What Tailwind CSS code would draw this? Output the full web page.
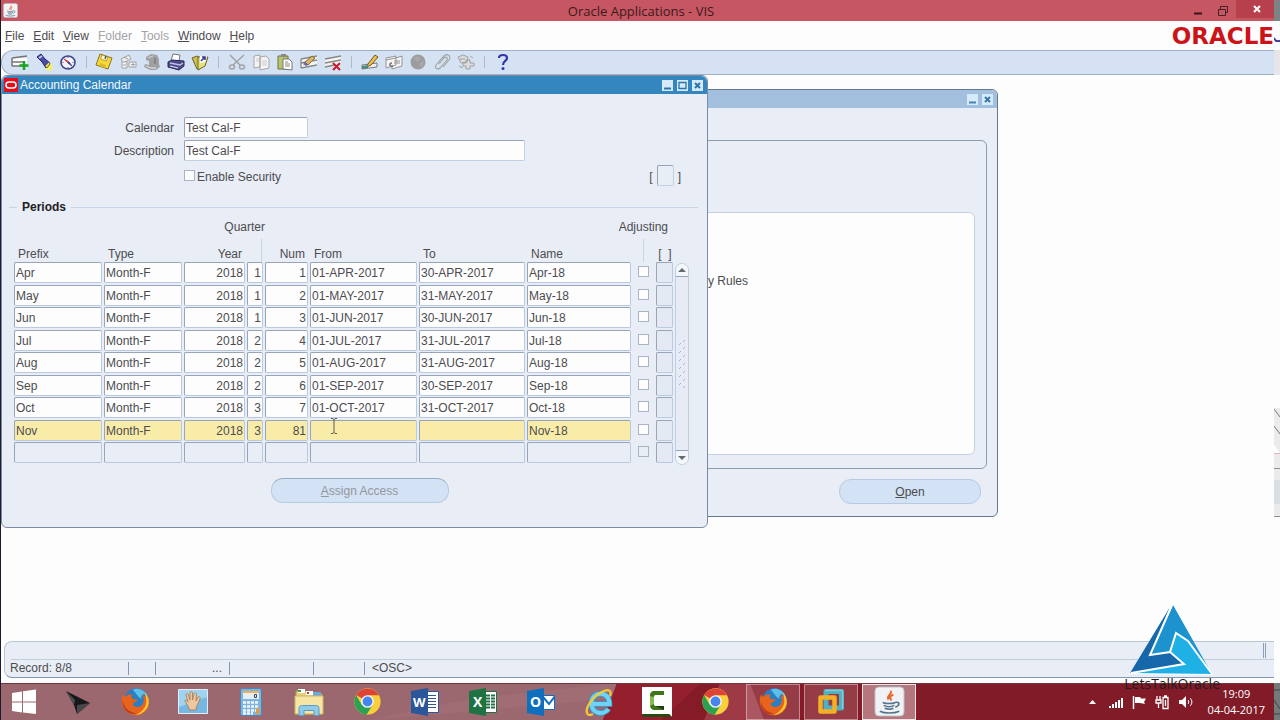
<!DOCTYPE html>
<html lang="en">
<head>
  <meta charset="UTF-8" />
  <meta name="viewport" content="width=device-width, initial-scale=1.0" />
  <title>Oracle Applications - VIS</title>
  <script src="https://cdn.jsdelivr.net/npm/@tailwindcss/browser@4"></script>
</head>
<body class="h-screen overflow-hidden bg-[#fdfdfd] font-['Liberation_Sans',sans-serif] text-xs text-[#4c4c50]">

  <!-- Shared icons -->
  <svg class="hidden">
    <symbol id="java" viewBox="0 0 32 32">
      <rect x="1" y="1" width="30" height="30" rx="4" fill="#f1f2f4" stroke="#b9bcc4" />
      <path d="M17 5c3 3-5 5-2 9M20 9c-4 2-4 3-2 6" fill="none" stroke="#e8642c" stroke-width="2" />
      <path d="M9 17c3 1.500 10 1.500 13 0M10 20c3 1.500 8 1.500 11 0M11 23c3 1 7 1 9 0M22 17c5-1 5 3 0 5M6 26c5 2.500 15 2.500 20 0" fill="none" stroke="#54738f" stroke-width="1.600" />
    </symbol>
    <symbol id="firefox" viewBox="0 0 32 32">
      <circle cx="17" cy="15" r="13.500" fill="#2a7fc4" />
      <path d="M13 3c5-3 13 0 16 6-5-3-8 1-6 4-4-1-6-6-10-10z" fill="#5cc0ea" />
      <path d="M3 8c0 3 1 3 3 2 2-2 5-2 7-1-2 1-2 3 0 4 2 1 4 0 5 1-1 3-5 3-5 5 1 4 8 4 11 0 2-4 1-8-1-11 6 3 9 9 7 14-3 8-12 11-19 8C3 27 0 19 1 13c0-2 1-4 2-5z" fill="#e8641c" />
      <path d="M26 6c5 4 6 11 3 17-3 5-8 8-13 8 7-3 12-9 12-15 0-4-1-7-2-10z" fill="#fbc52e" />
      <path d="M2 15c1 8 7 13 15 14C9 32 1 25 2 15z" fill="#c13a18" />
    </symbol>
    <symbol id="chrome" viewBox="0 0 32 32">
      <circle cx="16" cy="16" r="14.500" fill="#fbcf3b" />
      <path d="M16 16 3.400 8.800A14.500 14.500 0 0 1 28.600 9H16z" fill="#dd4437" />
      <path d="M3.400 8.800A14.500 14.500 0 0 0 15 30.500L21.500 20 16 16 10 20z" fill="#2aa153" />
      <circle cx="16" cy="16" r="7" fill="#f6f6f6" />
      <circle cx="16" cy="16" r="5.400" fill="#4684ee" />
    </symbol>
  </svg>

  <div class="relative flex h-full flex-col">

    <!-- Title bar -->
    <header class="flex h-[21px] shrink-0 items-center bg-[#c65662] pl-[3px] pr-[6px]">
      <svg class="size-[15px]"><use href="#java" /></svg>
      <h1 class="flex-1 pl-[78px] text-center font-['Open_Sans',sans-serif] text-[13px] leading-5 text-[#3c1a20]">Oracle Applications - VIS</h1>
      <button aria-label="Minimize" class="flex h-full w-6 items-center justify-center"><svg class="size-3" viewBox="0 0 12 12"><path d="M2 8.500h8" stroke="#35151a" stroke-width="2" /></svg></button>
      <button aria-label="Restore" class="flex h-full w-[26px] items-center justify-center"><svg class="size-3" viewBox="0 0 12 12" fill="none" stroke="#4a2027"><path d="M1.500 4.500h7v6h-7zM3.500 4V1.500h7v6H9" /></svg></button>
      <button aria-label="Close" class="flex h-[18px] w-[38px] items-center justify-center self-start bg-[#b83f4c] pl-1"><svg class="size-[10px]" viewBox="0 0 10 10"><path d="M2 2l6 6M8 2L2 8" stroke="#fff" stroke-width="2" /></svg></button>
    </header>

    <!-- Menu bar -->
    <nav class="flex h-[29px] shrink-0 items-center gap-[9px] pl-[5px] pr-[6px] pt-px text-[12px]">
      <a href="#"><u>F</u>ile</a>
      <a href="#"><u>E</u>dit</a>
      <a href="#"><u>V</u>iew</a>
      <a href="#" class="text-[#a3a3a8]"><u>F</u>older</a>
      <a href="#" class="text-[#a3a3a8]"><u>T</u>ools</a>
      <a href="#"><u>W</u>indow</a>
      <a href="#"><u>H</u>elp</a>
      <span class="ml-auto font-['DejaVu_Sans',sans-serif] text-[23px] leading-7 font-bold text-[#cb1419]">ORACLE</span>
    </nav>

    <!-- Toolbar -->
    <div class="ml-px mr-[6px] flex h-[25px] shrink-0 items-center rounded-l-xl border-y border-l border-[#9fb0c6] bg-[#d4e2f3] pb-[2px] pl-[6px]">
      <button aria-label="New" class="flex w-6 justify-center"><svg class="size-[18px]" viewBox="0 0 18 18"><path d="M1 5h15v8H1z" fill="#fafafa" /><path d="M1 5l15-2M1 9h12M1 13h9M1 5v8" stroke="#777" stroke-width="1.500" /><path d="M13 8v9M8.500 12.500h9" stroke="#17a31f" stroke-width="2.500" /></svg></button>
      <button aria-label="Find" class="flex w-6 justify-center"><svg class="size-[18px]" viewBox="0 0 18 18"><circle cx="14" cy="14" r="3.500" fill="#f8ee6a" /><path d="M2 4l4-3 4 5 5 4-4 5-4-6z" fill="#4a4aa8" stroke="#26266c" /><path d="M4 5l3-2" stroke="#c9c9f0" stroke-width="2" /><path d="M10 13l4-4 1 2-3 4z" fill="#e9dc58" stroke="#6b6a50" /></svg></button>
      <button aria-label="Show Navigator" class="flex w-6 justify-center"><svg class="size-[18px]" viewBox="0 0 18 18"><ellipse cx="9" cy="9.500" rx="7" ry="6.500" fill="#f3f3fb" stroke="#44448a" stroke-width="1.600" /><path d="M5 6l5 3-1 1z" fill="#d23c3c" stroke="#d23c3c" /><path d="M13 13L9 10l1-1z" fill="#44448a" stroke="#44448a" /><path d="M9 4v1M9 14v1M3.500 9.500h1M13.500 9.500h1" stroke="#555" /></svg></button>
      <span class="flex w-3 justify-center"><i class="h-3 w-px bg-[#b4bac4]"></i></span>
      <button aria-label="Save" class="flex w-6 justify-center"><svg class="size-[18px]" viewBox="0 0 18 18"><path d="M5 1l12 4-4 11L1 12z" fill="#f6d83a" stroke="#8d741b" /><path d="M7 2l6 2-1.500 4-6-2z" fill="#fff8d0" stroke="#ab8f28" stroke-width=".8" /><path d="M11 3l-1 3" stroke="#555" stroke-width="1.500" /><path d="M5 10l6 2-1 3-6-2z" fill="#e0b92a" /></svg></button>
      <button aria-label="Next Step" class="flex w-6 justify-center"><svg class="size-[18px]" viewBox="0 0 18 18" fill="#ececec" stroke="#a2a2a2"><path d="M2 6l8-4 2 4-8 4z" /><path d="M3 9h5v6H3zM10 9h7v5h-7z" fill="#f4f4f4" /><path d="M5 4l4 2M12 11.500h4M14 9.500v4M4 12h3" /></svg></button>
      <button aria-label="Switch Responsibility" class="flex w-6 justify-center"><svg class="size-[18px]" viewBox="0 0 18 18"><path d="M3 4l5-3 6 1 2 4v5l1 3-4 3H7l-6-3 1-3 4 1V8L3 7z" fill="#a0a0a2" /><path d="M5 5l5-2M3 13l5 2h5" stroke="#d4d4d4" stroke-width="1.300" fill="none" /><path d="M12 5v6" stroke="#858588" stroke-width="2" /></svg></button>
      <button aria-label="Print" class="flex w-6 justify-center"><svg class="size-[18px]" viewBox="0 0 18 18"><path d="M6 1l7 1-1 6H4z" fill="#fff" stroke="#777" /><path d="M1 9l4-2 12 1v5l-5 4-11-3z" fill="#4b4b8c" stroke="#2a2a55" /><path d="M3 10l10 2 3-2" stroke="#c0c0e4" stroke-width="1.500" fill="none" /><path d="M3 13l8 2" stroke="#e8e8f8" /></svg></button>
      <button aria-label="Close Form" class="flex w-6 justify-center"><svg class="size-[18px]" viewBox="0 0 18 18"><path d="M1 5l5-2 3 2v11H6z" fill="#c9be52" stroke="#6f6624" /><path d="M7 4h10l-3 9-7 4z" fill="#e6df7e" stroke="#6f6624" /><path d="M9 3h7l-2 6-5 1z" fill="#fff" /><path d="M10 8l4-4M11 4h3v3" stroke="#3538a0" stroke-width="1.600" fill="none" /></svg></button>
      <span class="flex w-[13px] justify-center"><i class="h-3 w-px bg-[#b4bac4]"></i></span>
      <button aria-label="Cut" class="flex w-6 justify-center"><svg class="size-[18px]" viewBox="0 0 18 18" fill="none" stroke="#a2a2a6" stroke-width="1.500"><path d="M2 2l10 10M16 2L5 12" /><ellipse cx="4" cy="14" rx="2.500" ry="2" /><ellipse cx="14" cy="14" rx="2.500" ry="2" /></svg></button>
      <button aria-label="Copy" class="flex w-6 justify-center"><svg class="size-[18px]" viewBox="0 0 18 18" fill="#f4f4f4" stroke="#a6a6a6"><path d="M2 3l6-1v12l-6 1zM8 4l6-1 3 3v9l-9 2z" /><path d="M10 8h5M10 10h5M10 12h5M4 6h3M4 8h3" stroke="#ccc" /></svg></button>
      <button aria-label="Paste" class="flex w-6 justify-center"><svg class="size-[18px]" viewBox="0 0 18 18"><path d="M2 3h10v13H2z" fill="#b8c46a" stroke="#6e7240" /><path d="M5 1h5v3H5z" fill="#888" /><path d="M7 6h6l3 3v8l-9-1z" fill="#fff" stroke="#777" /><path d="M9 9h3M9 11h5M9 13h5" stroke="#888" /></svg></button>
      <button aria-label="Clear Record" class="flex w-6 justify-center"><svg class="size-[18px]" viewBox="0 0 18 18"><path d="M1 6l16-3v9L1 15z" fill="#f4f4f4" /><path d="M1 6l16-3M1 10l16-3M1 15l16-3M1 6v9" stroke="#888" stroke-width="1.300" /><path d="M5 9l7-6 3 2-7 7z" fill="#d8b46a" stroke="#8b6b38" /><path d="M5 9l3 3-2 1-3-2z" fill="#6868b4" /></svg></button>
      <button aria-label="Delete Record" class="flex w-6 justify-center"><svg class="size-[18px]" viewBox="0 0 18 18"><path d="M1 6l16-3v8L1 14z" fill="#f4f4f4" /><path d="M1 6l16-3M1 10l16-3M1 14l9-2" stroke="#888" stroke-width="1.600" /><path d="M9 10l7 7M16 10l-7 7" stroke="#d0162a" stroke-width="2" /></svg></button>
      <span class="flex w-[13px] justify-center"><i class="h-3 w-px bg-[#b4bac4]"></i></span>
      <button aria-label="Edit Field" class="flex w-6 justify-center"><svg class="size-[18px]" viewBox="0 0 18 18"><path d="M1 12l15-2v4L1 16z" fill="#f0f0f0" stroke="#777" /><path d="M7 11l7-9 3 2-7 8-4 2z" fill="#f0c43e" stroke="#6d5330" /><path d="M1 13l6-1v3l-6 1z" fill="#4f8a83" /></svg></button>
      <button aria-label="Zoom" class="flex w-6 justify-center"><svg class="size-[18px]" viewBox="0 0 18 18" fill="#f4f4f4" stroke="#949494"><path d="M1 5l10-2v9l-10 3zM11 5l6-2v10l-10 3v-3" /><path d="M1 7l10-2M9 8h6M9 10h6" /><path d="M8 13c-4 1-4-3-1-3" fill="none" stroke="#777" stroke-width="1.500" /></svg></button>
      <button aria-label="Translations" class="flex w-6 justify-center"><svg class="size-[18px]" viewBox="0 0 18 18"><circle cx="9" cy="9" r="7.500" fill="#9d9da0" /><path d="M4 5l5-2 3 3-4 3zM11 10l4-2-1 5-3 1z" fill="#a8a8aa" /></svg></button>
      <button aria-label="Attachments" class="flex w-6 justify-center"><svg class="size-[18px]" viewBox="0 0 18 18" fill="none" stroke="#a0a0a0" stroke-width="1.100"><path d="M6 11l5-6c2-2 4 0 3 2l-7 8c-2 2-6 0-4-3l8-9c3-3 8 0 5 4l-6 7" /></svg></button>
      <button aria-label="Folder Tools" class="flex w-6 justify-center"><svg class="size-[18px]" viewBox="0 0 18 18" fill="#dcdcdc" stroke="#a0a0a0"><path d="M1 4l5-2 5 2-1 5-6 1zM9 7h4v3h4v3h-4v3H9v-3H6v-3h3z" /><path d="M3 6h5M2 13l4 2M13 3l3 2" /></svg></button>
      <span class="flex w-[13px] justify-center"><i class="h-3 w-px bg-[#b4bac4]"></i></span>
      <button aria-label="Help" class="flex w-6 justify-center"><svg class="size-[18px]" viewBox="0 0 18 18"><path d="M5 5c0-4 8-4 8 0 0 3-4 3-4 7" fill="none" stroke="#3434ac" stroke-width="2.200" /><circle cx="9" cy="15.500" r="1.500" fill="#3434ac" /></svg></button>
    </div>

    <!-- Desktop holding the form windows -->
    <main class="relative flex-1">

      <!-- Navigator window, partly covered -->
      <section class="absolute left-[690px] top-[14px] flex h-[428px] w-[308px] flex-col rounded-md border border-[#66788f] bg-[#e9edf5]">
        <div class="flex h-[18px] items-center justify-end gap-1 rounded-t-md bg-[#a2c0dd] pr-1">
          <button aria-label="Minimize window" class="size-[11px] bg-[#d5ebf9]"><svg viewBox="0 0 11 11"><path d="M2 8.500h7" stroke="#4583b4" stroke-width="2" /></svg></button>
          <button aria-label="Close window" class="size-[11px] bg-[#d5ebf9]"><svg viewBox="0 0 11 11"><path d="M3 3l5 5M8 3L3 8" stroke="#3a76a8" stroke-width="2" /></svg></button>
        </div>
        <div class="mr-[10px] mt-8 flex h-[329px] flex-col rounded-md border border-[#8a9bb2] pb-[13px] pr-[11px] pt-[71px]">
          <div class="flex-1 rounded-md border border-[#c5d0e2] bg-[#fdfdfd] pl-[15px] pt-[60px] leading-4">y Rules</div>
        </div>
        <button class="mr-4 mt-[10px] h-[25px] w-[142px] self-end rounded-xl border border-[#b6cbe3] bg-[#d3e2f4]"><u>O</u>pen</button>
      </section>

      <!-- Accounting Calendar window -->
      <section class="absolute left-px top-0 flex h-[453px] w-[707px] flex-col rounded-md border border-[#7b8ca3] bg-[#e9edf5]">
        <div class="flex h-[18px] items-center gap-1 rounded-t-md bg-[#3386be] pl-[2px] pr-1">
          <svg class="h-[14px] w-[14px]" viewBox="0 0 14 14"><path fill="#e3101c" d="M0 0h14v14H0z" /><rect x="2" y="4" width="10" height="6" rx="3" fill="none" stroke="#fff" stroke-width="1.500" /></svg>
          <h2 class="flex-1 -ml-[2px] leading-4 text-[#f3f8fc]">Accounting Calendar</h2>
          <button aria-label="Minimize calendar" class="size-[11px] bg-[#d5ebf9]"><svg viewBox="0 0 11 11"><path d="M2 8.500h7" stroke="#2c75ab" stroke-width="2" /></svg></button>
          <button aria-label="Maximize calendar" class="size-[11px] bg-[#d5ebf9]"><svg viewBox="0 0 11 11"><path d="M2 2.500h7v6H2z" fill="none" stroke="#2c75ab" stroke-width="1.300" /></svg></button>
          <button aria-label="Close calendar" class="size-[11px] bg-[#d5ebf9]"><svg viewBox="0 0 11 11"><path d="M3 3l5 5M8 3L3 8" stroke="#2c75ab" stroke-width="2" /></svg></button>
        </div>

        <form class="flex flex-col gap-[2px] px-3 pt-[23px]">
          <div class="flex items-center gap-[10px]">
            <label for="calendar" class="w-[160px] pt-px text-right">Calendar</label>
            <input id="calendar" type="text" value="Test Cal-F" class="h-[21px] w-[124px] rounded-xs border border-[#c3d0e3] border-l-[#98a4b8] border-t-[#98a4b8] bg-[#fdfdfd] px-px" />
          </div>
          <div class="flex items-center gap-[10px]">
            <label for="description" class="w-[160px] pt-px text-right">Description</label>
            <input id="description" type="text" value="Test Cal-F" class="h-[21px] w-[341px] rounded-xs border border-[#c3d0e3] border-l-[#98a4b8] border-t-[#98a4b8] bg-[#fdfdfd] px-px" />
          </div>
          <div class="flex h-6 items-center pl-[170px] pr-[14px]">
            <input id="security" type="checkbox" class="size-[11px] appearance-none border border-[#a9b5c6] bg-[#fdfdfd]" />
            <label for="security" class="pl-[2px] pt-[3px]">Enable Security</label>
            <span class="ml-auto pt-1">[</span>
            <input aria-label="Calendar flexfield" type="text" class="mx-1 h-[21px] w-[17px] rounded-xs border border-[#c3d0e3] border-l-[#98a4b8] border-t-[#98a4b8]" />
            <span class="pt-1">]</span>
          </div>
        </form>

        <div class="mt-3 flex h-4 items-center gap-[5px] pl-[7px] pr-[9px]">
          <i class="h-px w-2 bg-[#c8d4e4]"></i>
          <h3 class="font-bold text-[#222]">Periods</h3>
          <i class="h-px flex-1 bg-[#c8d4e4]"></i>
        </div>

        <!-- Period grid -->
        <div class="flex gap-px pl-3">
          <table class="w-[660px] table-fixed border-collapse">
            <colgroup>
              <col class="w-[90px]" /><col class="w-[80px]" /><col class="w-[63px]" /><col class="w-[18px]" /><col class="w-[45px]" />
              <col class="w-[109px]" /><col class="w-[108px]" /><col class="w-[106px]" /><col class="w-[23px]" /><col class="w-[18px]" />
            </colgroup>
            <thead class="text-left [&_th]:p-0 [&_th]:align-bottom [&_th]:font-normal">
              <tr class="h-6">
                <th colspan="2"></th>
                <th colspan="2"><span class="block pb-1 text-right">Quarter</span></th>
                <th colspan="3"></th>
                <th colspan="3"><span class="block pb-1 pr-[6px] text-right">Adjusting</span></th>
              </tr>
              <tr class="h-[23px]">
                <th><span class="pl-1">Prefix</span></th>
                <th><span class="pl-1">Type</span></th>
                <th><span class="block pr-[5px] text-right">Year</span></th>
                <th aria-label="Quarter"><i class="ml-[14px] block h-[23px] w-px bg-[#c8d4e4]"></i></th>
                <th><span class="block pr-[5px] text-right">Num</span></th>
                <th><span class="pl-1">From</span></th>
                <th><span class="pl-1">To</span></th>
                <th><span class="pl-1">Name</span></th>
                <th aria-label="Adjusting"><i class="ml-[10px] block h-[23px] w-px bg-[#c8d4e4]"></i></th>
                <th><span class="block whitespace-pre text-center">[  ]</span></th>
              </tr>
            </thead>
            <tbody id="periods"></tbody>
          </table>
          <div class="flex h-[202px] w-[14px] flex-col self-end rounded-full border border-[#c0cee2] bg-[#e9edf5]">
            <button aria-label="Scroll up" class="flex h-[13px] items-center justify-center rounded-t-full border-b border-[#93a5bd] bg-[#f3f6fb]"><svg class="h-1 w-2" viewBox="0 0 8 4"><path d="M0 4l4-4 4 4z" fill="#666b78" /></svg></button>
            <div class="flex flex-1 items-center justify-center bg-[#e6ebf5]">
              <svg class="h-12 w-2" viewBox="0 0 8 48" stroke="#a7b5ca"><path d="M1 5l2-2M5 2l2-2M1 13l2-2M5 9l2-2M1 21l2-2M5 17l2-2M1 29l2-2M5 25l2-2M1 37l2-2M5 33l2-2M1 45l2-2M5 41l2-2M5 48l2-2" /></svg>
            </div>
            <button aria-label="Scroll down" class="flex h-[14px] items-center justify-center rounded-b-full border-t border-[#93a5bd] bg-[#f3f6fb]"><svg class="h-1 w-2" viewBox="0 0 8 4"><path d="M0 0l4 4 4-4z" fill="#666b78" /></svg></button>
          </div>
        </div>

        <button disabled class="ml-[10px] mt-[13px] h-[25px] w-[178px] self-center rounded-xl border border-[#b6cbe3] border-t-[#9aa9bd] bg-[#d3e2f4] text-[#92979f]"><u>A</u>ssign Access</button>
      </section>

      <!-- Text pointer -->
      <svg class="absolute left-[330px] top-[343px] h-4 w-2" viewBox="0 0 8 16"><path d="M1 .5h2l1 1 1-1h2M4 1v14M1 15.500h2l1-1 1 1h2" fill="none" stroke="#5d5a4a" /></svg>
    </main>

    <!-- Status bar -->
    <footer class="mb-[5px] ml-1 mr-[6px] shrink-0 rounded-l-lg border border-r-0 border-[#b9c6d8] border-b-[#8496b0] bg-[#e9edf5]">
      <div class="ml-[6px] flex h-[18px] justify-end border-b border-[#c2cddc] pr-2">
        <i class="my-px w-[3px] border-x border-[#8ea0b9]"></i>
      </div>
      <div class="flex h-[17px] items-center pb-px pl-[5px]">
        <span class="h-[13px] w-[119px] border-r border-[#8496b0] leading-[13px]">Record: 8/8</span>
        <span class="h-[13px] w-[27px] border-r border-[#8496b0]"></span>
        <span class="h-[13px] w-[74px] border-r border-[#8496b0] pr-[7px] text-right leading-[13px]">...</span>
        <span class="h-[13px] w-[84px] border-r border-[#8496b0]"></span>
        <span class="h-[13px] w-[51px] border-r border-[#8496b0]"></span>
        <span class="pl-[7px] leading-[13px]">&lt;OSC&gt;</span>
      </div>
    </footer>

    <!-- Taskbar -->
    <div class="relative flex h-[37px] shrink-0 items-center gap-1 bg-[#841b27] pr-[6px]">
      <svg class="absolute inset-0 h-full w-full" viewBox="0 0 1280 37" preserveAspectRatio="none">
        <path d="M0 0h617l-14 37H0z" fill="#9b6870" />
        <path d="M470 16L617 0l-6 16-241 21z" fill="#a06d75" />
        <path d="M617 0h84l-40 37h-58z" fill="#94202e" />
        <path d="M720 0h30l14 37h-60z" fill="#9d3a46" />
        <path d="M920 0h354v37H920z" fill="#801b27" />
        <path d="M0 .5h1274" stroke="#6d3a42" />
      </svg>
      <button aria-label="Start" class="relative flex h-9 w-12 items-center justify-center"><svg class="size-[26px]" viewBox="0 0 26 26" fill="#fff"><path d="M1 4l10-1.500v10H1zM12 2.300L25 .5v12H12zM1 13.500h10v10L1 22zM12 13.500h13V25l-13-1.500z" /></svg></button>
      <button aria-label="Inkscape" class="relative flex h-9 w-[52px] items-center justify-center"><svg class="size-7" viewBox="0 0 28 28"><path d="M2 3l24 12-13 11-3-9z" fill="#171719" /><path d="M2 3l9 9-1 5z" fill="#4d4d50" /><path d="M13 17l13-2-13 11z" fill="#48484a" /></svg></button>
      <button aria-label="Firefox" class="relative flex h-9 w-[54px] items-center justify-center"><svg class="size-[29px]"><use href="#firefox" /></svg></button>
      <button aria-label="Hand tool" class="relative flex h-9 w-[54px] items-center justify-center"><svg class="h-[25px] w-[30px]" viewBox="0 0 30 25"><path d="M.5.500h29v24H.5z" fill="#9fd3f2" stroke="#e4eef4" /><path d="M1 18L29 8v16H1z" fill="#76b8e4" /><path d="M11 19l-4-7c0-2 2-1 3 1L8 6c0-2 2-2 2.500 0l1.500 5V4c0-2 2.500-2 2.500 0v7L16 5c0-2 2.500-1 2.500 0L18 12l2-4c1-1 3 0 2 2l-4 9v2h-7z" fill="#ecc7a0" stroke="#a87850" stroke-width=".8" /></svg></button>
      <button aria-label="Calculator" class="relative flex h-9 w-[54px] items-center justify-center"><svg class="h-7 w-[22px]" viewBox="0 0 22 28"><rect x=".5" y=".5" width="21" height="27" rx="2" fill="#7fb4df" stroke="#4f84b4" /><path d="M3 3h16v8H3z" fill="#e6eef4" /><path d="M3 3h16v2H3z" fill="#f0b05a" /><path d="M14.500 6.500h2v3h-2z" fill="none" stroke="#345" /><path d="M3 14.500h16M3 18.500h16M3 22.500h16M3 25.500h10" stroke="#eff6fb" stroke-width="2.500" stroke-dasharray="3 1" /><path d="M16 20h3v6h-3z" fill="#e99a3e" /></svg></button>
      <button aria-label="File Explorer" class="relative flex h-9 w-[54px] items-center justify-center"><svg class="h-7 w-[30px]" viewBox="0 0 30 28"><path d="M2 3h10l2 3h14v20H2z" fill="#e8cf7e" stroke="#b5974b" /><path d="M4 1h7v4H4z" fill="#fff" /><path d="M4 2h3v2H4z" fill="#38a344" /><path d="M12 3h7v4h-7z" fill="#fff" /><path d="M13 4h2v2h-2z" fill="#c63a34" /><path d="M19 4h8v4h-8z" fill="#6aa9dc" /><path d="M1 8h28v18H1z" fill="#f5e7a3" stroke="#cdb565" /><path d="M5 27.500v-7c0-3 2-3 4-3h12c2 0 4 0 4 3v7h-5v-5H10v5z" fill="#8fcbea" stroke="#5a9cc4" /></svg></button>
      <button aria-label="Chrome" class="relative flex h-9 w-[54px] items-center justify-center"><svg class="size-[29px]"><use href="#chrome" /></svg></button>
      <button aria-label="Word" class="relative flex h-9 w-[54px] items-center justify-center"><svg class="size-7" viewBox="0 0 28 28"><path d="M15 3.500h12.500v21H15z" fill="#fff" stroke="#2b579a" /><path d="M17 7.500h8M17 10.500h8M17 13.500h8M17 16.500h8M17 19.500h8" stroke="#2b579a" /><path d="M0 3L17 0v28L0 25z" fill="#2b579a" /><text x="2" y="19" font-family="Open Sans" font-size="13" font-weight="700" fill="#fff">W</text></svg></button>
      <button aria-label="Excel" class="relative flex h-9 w-[54px] items-center justify-center"><svg class="size-7" viewBox="0 0 28 28"><path d="M15 3.500h12.500v21H15z" fill="#fff" stroke="#1f7244" /><path d="M17 7.500h9M17 10.500h9M17 13.500h9M17 16.500h9M17 19.500h9" stroke="#1f7244" stroke-width="2" stroke-dasharray="4 1" /><path d="M0 3L17 0v28L0 25z" fill="#1f7244" /><text x="4" y="19" font-family="Open Sans" font-size="14" font-weight="700" fill="#fff">X</text></svg></button>
      <button aria-label="Outlook" class="relative flex h-9 w-[54px] items-center justify-center"><svg class="size-7" viewBox="0 0 28 28"><path d="M15 7.500h12.500v14H15z" fill="#fff" stroke="#0f6fbf" /><path d="M16 9l6 7 6-8" fill="none" stroke="#0f6fbf" stroke-width="2" /><path d="M0 3L17 0v28L0 25z" fill="#0f6fbf" /><text x="3" y="19" font-family="Open Sans" font-size="14" font-weight="700" fill="#fff">O</text></svg></button>
      <button aria-label="Internet Explorer" class="relative flex h-9 w-[54px] items-center justify-center"><svg class="size-7" viewBox="0 0 28 28" fill="none"><path d="M6 16h18.500c0-14-18-13-18-1 0 12 13 12 17 6" stroke="#2e9fd6" stroke-width="5.500" /><path d="M6 16h18.500c0-14-18-13-18-1 0 12 13 12 17 6" stroke="#6fd3f7" stroke-width="4" /><path d="M25 8c2-5-1-8-8-4C8 8 0 20 2 25c1 3 4 2 6 1" stroke="#f5c835" stroke-width="2.300" /></svg></button>
      <button aria-label="Camtasia" class="relative flex h-9 w-[54px] items-center justify-center"><svg class="size-[30px]" viewBox="0 0 30 30"><path d="M0 0h30v30l-3-3H0z" fill="#fdfdfd" /><path d="M0 27h27l3 3H1z" fill="#274b12" /><path d="M22 4H13c-4 0-5 2-5 5v9c0 3 2 5 5 5h9v-4h-8c-2 0-2-1-2-2v-7c0-1 0-2 2-2h8z" fill="#3f761c" /><path d="M8 9l4 1v7l-4 2z" fill="#87b94c" /><path d="M13 19h9v4z" fill="#1f3d10" /></svg></button>
      <button aria-label="Chrome profile" class="relative flex h-9 w-[54px] items-center justify-center"><svg class="size-[29px]"><use href="#chrome" /></svg></button>
      <button aria-label="Firefox window" class="relative flex h-9 w-[54px] items-center justify-center border border-white/40 bg-white/15"><svg class="size-[29px]"><use href="#firefox" /></svg></button>
      <button aria-label="VMware" class="relative flex h-9 w-[54px] items-center justify-center border border-white/40 bg-white/15"><svg class="size-7" viewBox="0 0 28 28" fill="none" stroke-linejoin="round"><path d="M9 3.500h15.500V20H9z" stroke="#4fb0c4" stroke-width="5" /><path d="M3.500 9.500h14v14h-14z" stroke="#f4b024" stroke-width="4.500" /><path d="M8 2.500h17.500V21" stroke="#7accd8" stroke-width="1.500" /></svg></button>
      <button aria-label="Java" class="relative flex h-9 w-[54px] items-center justify-center border border-white/80 bg-white/40"><svg class="size-[31px]"><use href="#java" /></svg></button>

      <div class="relative ml-auto flex items-center gap-[5px] pr-[9px] text-white">
        <svg class="mr-2 h-1 w-[7px]" viewBox="0 0 7 4"><path d="M0 4l3.500-4L7 4z" fill="#fff" /></svg>
        <svg class="h-4 w-[15px]" viewBox="0 0 15 16" fill="#fff"><path d="M0 12h2v2H0zM3 10h2v4H3zM6 8h2v6H6zM9 6h2v8H9zM12 4h2v10h-2z" /></svg>
        <svg class="ml-[3px] h-4 w-[15px]" viewBox="0 0 15 16"><path d="M1.500 2v13" stroke="#fff" stroke-width="1.500" /><path d="M3 3h5l1 1.500h5L12 8l1 2-5-1H3z" fill="#fff" /></svg>
        <svg class="ml-[3px] h-4 w-[15px]" viewBox="0 0 15 16" fill="none" stroke="#fff" stroke-width="1.300"><path d="M2 2v4M5 2v4M1 6h5v3H1zM3.500 9v5M8 3.500h5v11H8zM9 2h3M10.500 6v6" /></svg>
        <svg class="ml-[3px] h-4 w-[15px]" viewBox="0 0 15 16"><path d="M1 6h3l4-4v12l-4-4H1z" fill="#fff" /><path d="M10 6c1 1 1 3 0 4M12 4c2.500 2 2.500 6 0 8" fill="none" stroke="#fff" /></svg>
        <time class="ml-[10px] text-center font-['Open_Sans',sans-serif] text-[11px] leading-4">19:09<br />04-04-2017</time>
      </div>
    </div>

    <!-- LetsTalkOracle watermark -->
    <div class="absolute bottom-7 right-[60px] flex flex-col items-start">
      <svg class="ml-[5px] h-[72px] w-[84px]" viewBox="0 0 84 72">
        <path d="M43 0l41 71-84-1z" fill="#fff" />
        <path d="M41 3L1 69l54-9-14-12-20 3z" fill="#1668ab" />
        <path d="M44 1L21 51l20-3 6-20 36 42z" fill="#1c93cf" />
        <path d="M47 28l12 8 24 34-82-1 54-9-14-12z" fill="#1fb1e6" />
        <path d="M43 1L21 51l20-3 6-19 12 8 24 33M41 48l14 12-53 9" fill="none" stroke="#fff" stroke-width="2" />
      </svg>
      <span class="font-['Open_Sans',sans-serif] text-sm leading-4 text-[#2a1a20]">LetsTalkOracle</span>
    </div>

    <!-- Second screen edges on both sides -->
    <i class="absolute inset-y-0 left-0 w-px bg-[#1c1c2c]"></i>
    <svg class="absolute right-0 top-0 h-[720px] w-[6px]" viewBox="0 0 6 720">
      <path d="M0 0h6v21H0z" fill="#8a7e86" />
      <path d="M0 3.500h6M0 8.500h6M0 13.500h6M0 18.500h6" stroke="#4f9a86" />
      <path d="M0 38l2 3h4" fill="none" stroke="#4c3f92" stroke-width="2" />
      <path d="M0 50h6v25H0z" fill="#e6e6e8" />
      <path d="M0 408h6v109H0z" fill="#ebebed" />
      <path d="M0 409l6 8M0 426l6 8" stroke="#77777c" />
      <path d="M0 445l6 8H0z" fill="#fff" />
      <path d="M0 453.500h6" stroke="#e2b4b6" />
      <path d="M0 468.500h6M0 516.500h6" stroke="#8e9094" />
      <path d="M0 480h6v24H0z" fill="#dbdfe2" />
      <path d="M0 683h6v37H0z" fill="#74797a" />
      <path d="M0 700l6 9M0 690h6M0 714h6" stroke="#3c4546" />
    </svg>
  </div>

  <script>
    const periods = [
      ["Apr", "Month-F", "2018", "1", "1", "01-APR-2017", "30-APR-2017", "Apr-18"],
      ["May", "Month-F", "2018", "1", "2", "01-MAY-2017", "31-MAY-2017", "May-18"],
      ["Jun", "Month-F", "2018", "1", "3", "01-JUN-2017", "30-JUN-2017", "Jun-18"],
      ["Jul", "Month-F", "2018", "2", "4", "01-JUL-2017", "31-JUL-2017", "Jul-18"],
      ["Aug", "Month-F", "2018", "2", "5", "01-AUG-2017", "31-AUG-2017", "Aug-18"],
      ["Sep", "Month-F", "2018", "2", "6", "01-SEP-2017", "30-SEP-2017", "Sep-18"],
      ["Oct", "Month-F", "2018", "3", "7", "01-OCT-2017", "31-OCT-2017", "Oct-18"],
      ["Nov", "Month-F", "2018", "3", "81", "", "", "Nov-18"],
      ["", "", "", "", "", "", "", ""]
    ];
    const fields = ["Prefix", "Type", "Year", "Quarter", "Num", "From", "To", "Name"];
    const current = 7;

    document.getElementById("periods").innerHTML = periods.map((row, r) => {
      const bg = r === current ? "bg-[#f9eca8]" : row[0] ? "bg-[#fdfdfd]" : "bg-[#e9edf5]";
      const boxBg = row[0] ? "bg-[#fdfdfd]" : "bg-[#e9edf5]";
      const cells = row.map((value, c) => {
        const align = c >= 2 && c <= 4 ? "text-right" : "text-left";
        return `<td class="p-0 pr-[2px] align-top"><input type="text" aria-label="${fields[c]} ${r + 1}" value="${value}" class="block h-[21px] w-full rounded-xs border border-[#b9c9e0] border-l-[#98a4b8] border-t-[#98a4b8] px-px ${align} ${bg}" /></td>`;
      }).join("");
      return `<tr class="odd:h-[23px] even:h-[22px]">${cells}
        <td class="p-0 align-top"><input type="checkbox" aria-label="Adjusting ${r + 1}" class="ml-[5px] mt-1 block size-[11px] appearance-none border border-[#a9b5c6] ${boxBg}" /></td>
        <td class="p-0 align-top"><input type="text" aria-label="Flexfield ${r + 1}" class="block h-[21px] w-[17px] rounded-xs border border-[#b9c9e0] border-l-[#98a4b8] border-t-[#98a4b8] bg-[#e4e9f4]" /></td>
      </tr>`;
    }).join("");
  </script>
</body>
</html>
